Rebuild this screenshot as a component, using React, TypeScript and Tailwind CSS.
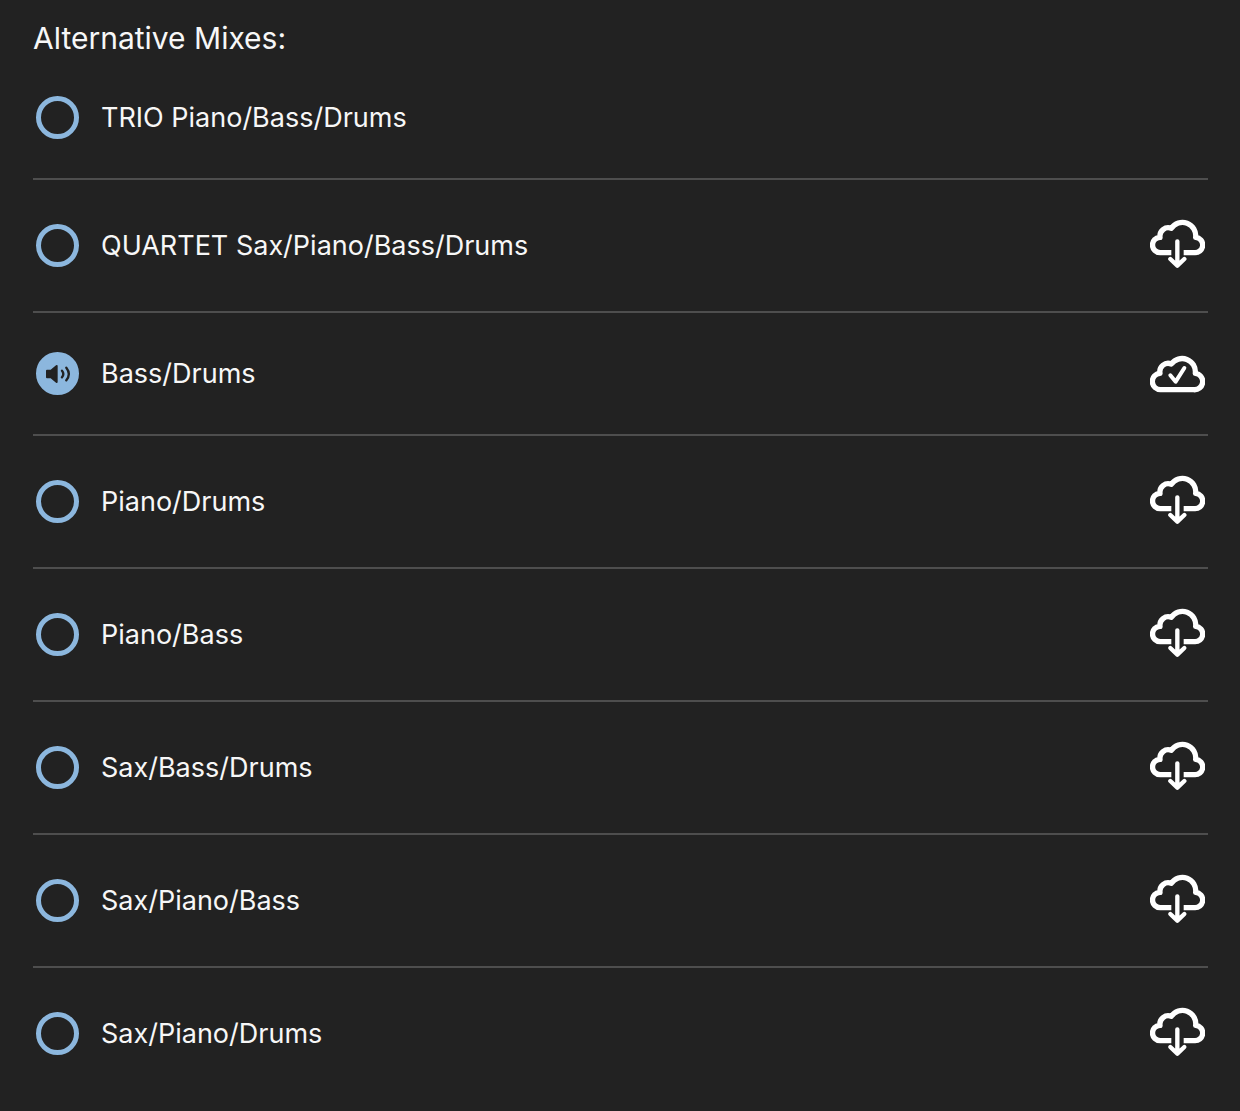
import { useState } from "react";

type Mix = {
  id: string;
  name: string;
  status: "builtin" | "remote" | "downloaded";
};

const mixes: Mix[] = [
  { id: "trio", name: "TRIO Piano/Bass/Drums", status: "builtin" },
  { id: "quartet", name: "QUARTET Sax/Piano/Bass/Drums", status: "remote" },
  { id: "bass-drums", name: "Bass/Drums", status: "downloaded" },
  { id: "piano-drums", name: "Piano/Drums", status: "remote" },
  { id: "piano-bass", name: "Piano/Bass", status: "remote" },
  { id: "sax-bass-drums", name: "Sax/Bass/Drums", status: "remote" },
  { id: "sax-piano-bass", name: "Sax/Piano/Bass", status: "remote" },
  { id: "sax-piano-drums", name: "Sax/Piano/Drums", status: "remote" },
];

function CloudDownloadIcon() {
  return (
    <svg
      viewBox="0 0 165 159"
      className="h-[53px] w-[55px]"
      fill="none"
      stroke="currentColor"
      strokeLinejoin="round"
      aria-hidden="true"
    >
      <path
        strokeWidth="16"
        d="M64 101H31A23 23 0 0 1 30 55A25 25 0 0 1 64 28A40 40 0 0 1 137 55A23 23 0 0 1 133 101H101"
      />
      <path strokeWidth="13" strokeLinecap="round" d="M82 67V138M61 120L82 140L103 120" />
    </svg>
  );
}

function CloudCheckIcon() {
  return (
    <svg
      viewBox="0 0 165 114"
      className="h-[38px] w-[55px]"
      fill="none"
      stroke="currentColor"
      strokeLinejoin="round"
      aria-hidden="true"
    >
      <path
        strokeWidth="16"
        d="M33 104A24 24 0 0 1 30 55A25 25 0 0 1 64 27A40 40 0 0 1 136 55A24 24 0 0 1 131 104Z"
      />
      <path strokeWidth="12" strokeLinecap="round" d="M61 61L77 80L103 39" />
    </svg>
  );
}

function SpeakerIcon() {
  return (
    <svg
      viewBox="0 0 78 60"
      className="pointer-events-none absolute h-5 w-[26px] text-[#222222]"
      fill="none"
      stroke="currentColor"
      strokeLinecap="round"
      strokeLinejoin="round"
      aria-hidden="true"
    >
      <path
        fill="currentColor"
        strokeWidth="6"
        d="M6 20H18L35 6V54L18 40H6Z"
      />
      <path strokeWidth="7" d="M51 20Q59 30 51 40M64 11Q79 30 64 49" />
    </svg>
  );
}

export default function App() {
  const [selected, setSelected] = useState("bass-drums");

  return (
    <main className="min-h-screen bg-[#222222] pt-4 pr-8 pl-[33px] font-[Inter,'Liberation_Sans',sans-serif] text-[#f7f7f7]">
      <h1 id="mixes-title" className="text-[30px] leading-[44px]">
        Alternative Mixes:
      </h1>
      <ul role="radiogroup" aria-labelledby="mixes-title">
        {mixes.map((mix) => (
          <li
            key={mix.id}
            className="flex items-center justify-between border-b-2 border-[#4e4e4e] py-[39px] first:pt-9 last:border-b-0"
          >
            <label className="flex items-center gap-[22px] pl-[3px] text-[27px] leading-8">
              <span className="relative flex items-center justify-center">
                <input
                  type="radio"
                  name="mix"
                  value={mix.id}
                  checked={selected === mix.id}
                  onChange={() => setSelected(mix.id)}
                  className="size-[43px] appearance-none rounded-full border-5 border-[#8cb7de] checked:bg-[#8cb7de]"
                />
                {selected === mix.id && <SpeakerIcon />}
              </span>
              {mix.name}
            </label>
            {mix.status === "remote" && (
              <button type="button" aria-label={`Download ${mix.name}`} className="mr-[3px] text-white">
                <CloudDownloadIcon />
              </button>
            )}
            {mix.status === "downloaded" && (
              <button type="button" aria-label={`${mix.name} downloaded`} className="mr-[3px] text-white">
                <CloudCheckIcon />
              </button>
            )}
          </li>
        ))}
      </ul>
    </main>
  );
}
